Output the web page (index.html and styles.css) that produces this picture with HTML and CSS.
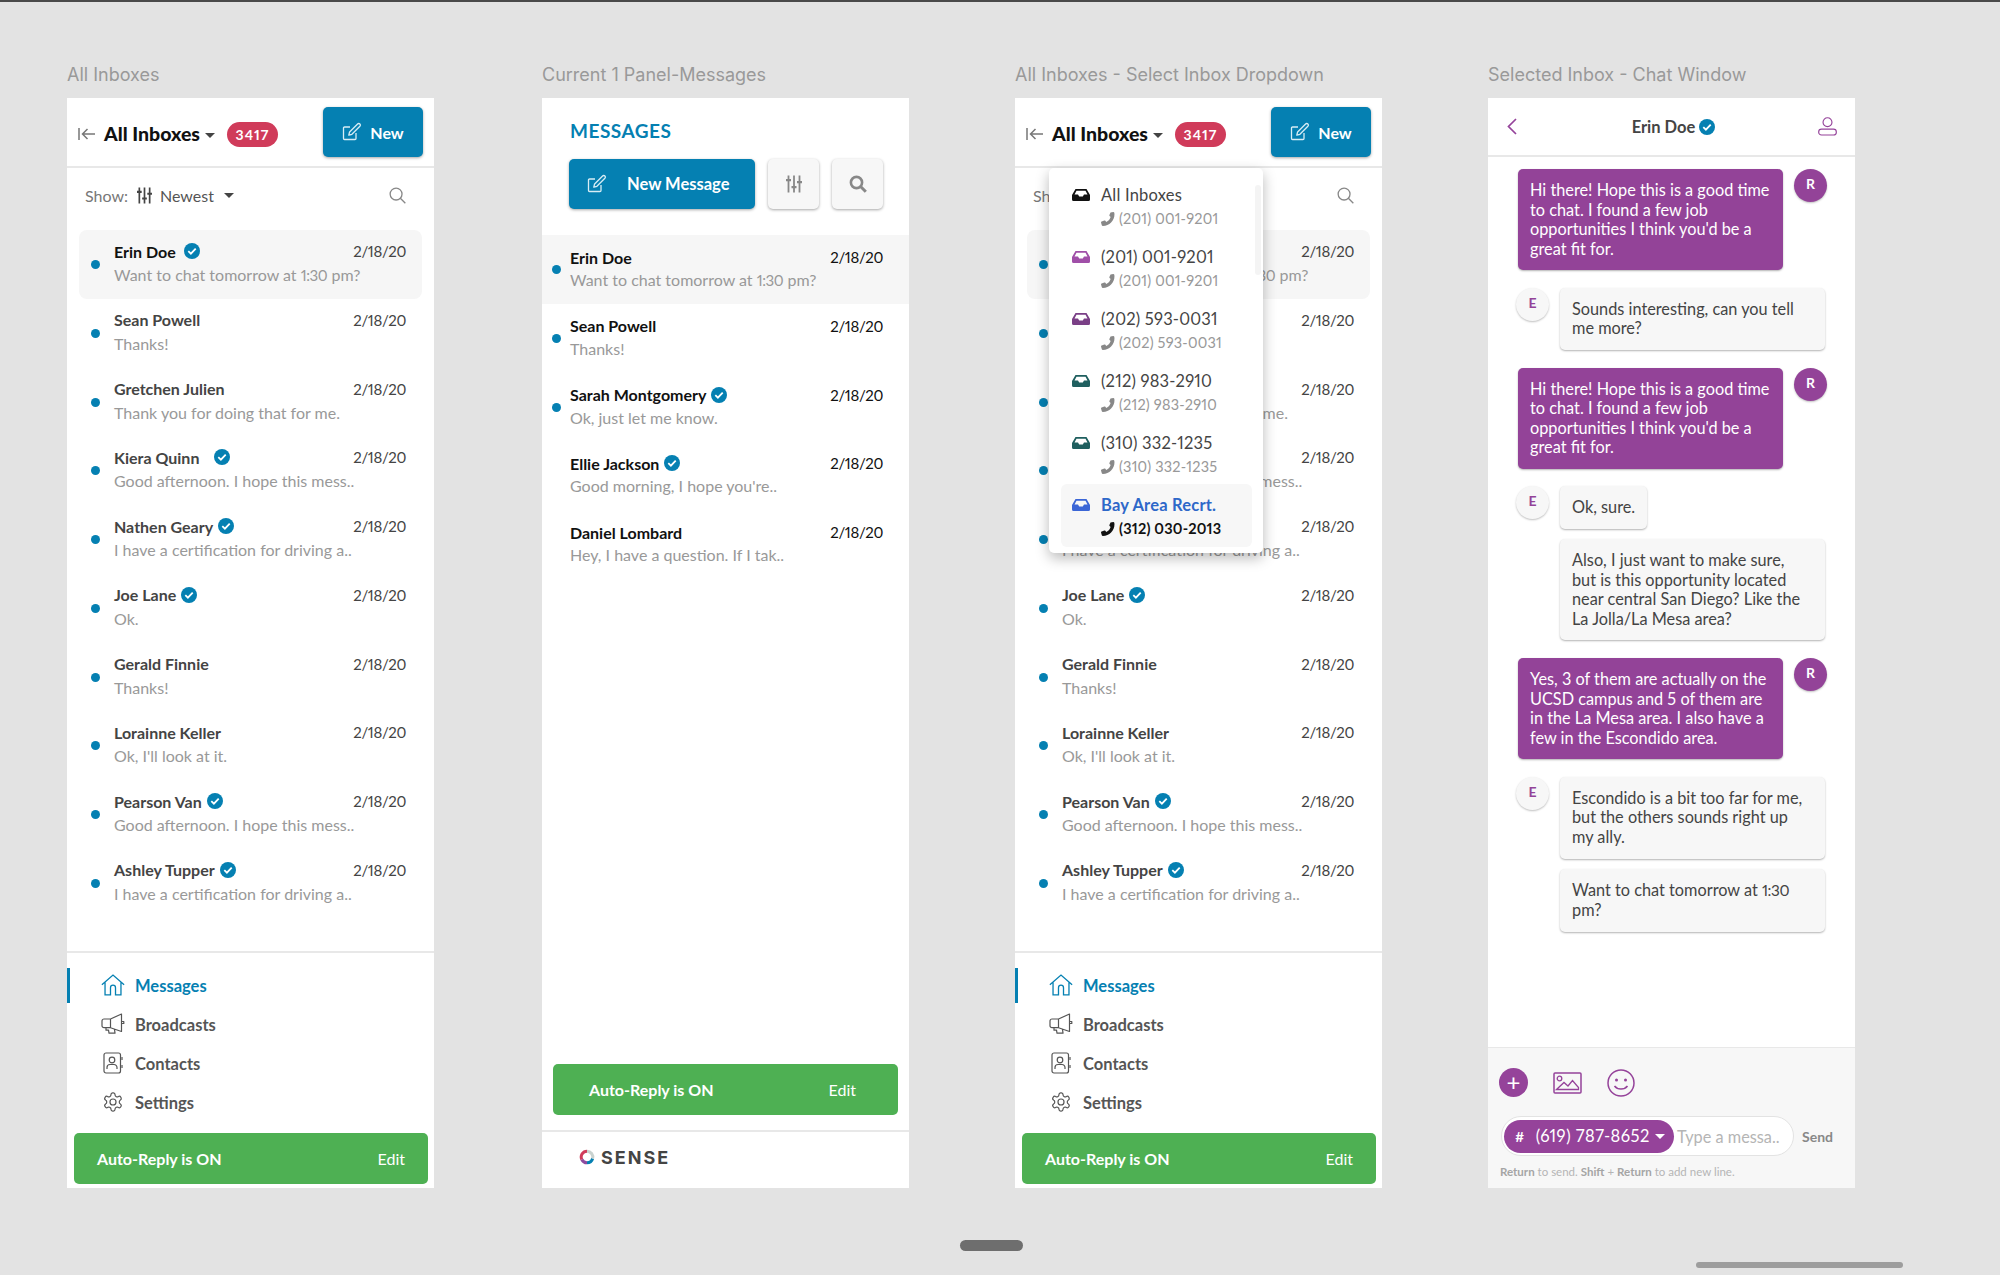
FILE: index.html
```html
<!DOCTYPE html>
<html lang="en">
<head>
    <meta charset="UTF-8">
    <title>Sense Messaging Screens</title>
    <link rel="stylesheet" href="styles.css">
</head>
<body>
    <svg class="sprite" width="0" height="0">
        <symbol id="i-compose" viewBox="0 0 20 20"><path d="M14 11v5.500a1 1 0 0 1-1 1H2.500a1 1 0 0 1-1-1V6a1 1 0 0 1 1-1H8" fill="none" stroke="currentColor" stroke-width="1.300"/><path d="M6.800 13.200l.8-3.200 8-8a1.500 1.500 0 0 1 2.300 2.300l-8 8z" fill="none" stroke="currentColor" stroke-width="1.300" stroke-linejoin="round"/></symbol>
        <symbol id="i-back" viewBox="0 0 18 14"><path d="M1 1v12M17 7H4.500M9.500 2L4.500 7l5 5" fill="none" stroke="currentColor" stroke-width="1.500"/></symbol>
        <symbol id="i-sliders" viewBox="0 0 16 17"><path d="M2.500 0v17M8 0v17M13.500 0v17" stroke="currentColor" stroke-width="1.800"/><path d="M0 3.500h5v2.200H0zM5.500 10.500h5v2.200h-5zM11 5.500h5v2.200h-5z" fill="currentColor"/></symbol>
        <symbol id="i-search" viewBox="0 0 18 18"><circle cx="7.500" cy="7.500" r="6.300" fill="none" stroke="currentColor" stroke-width="1.400"/><path d="M12 12l5.300 5.300" stroke="currentColor" stroke-width="1.400"/></symbol>
        <symbol id="i-search-bold" viewBox="0 0 18 18"><circle cx="7.500" cy="7.500" r="5.600" fill="none" stroke="currentColor" stroke-width="2.600"/><path d="M11.800 11.800l5 5" stroke="currentColor" stroke-width="3"/></symbol>
        <symbol id="i-check" viewBox="0 0 16 16"><circle cx="8" cy="8" r="8" fill="#0580b2"/><path d="M4.300 8.200l2.600 2.500 4.800-5" fill="none" stroke="#fff" stroke-width="1.800"/></symbol>
        <symbol id="i-home" viewBox="0 0 22 20"><path d="M.8 9.800L11 .9l10.200 8.900M3.700 7.500v11.500h5V12.500a2.300 2.300 0 0 1 4.600 0v6.500h5V7.500" fill="none" stroke="currentColor" stroke-width="1.200"/></symbol>
        <symbol id="i-broadcast" viewBox="0 0 24 22"><path d="M20.500 1v17.500L9.500 14.700H3a2 2 0 0 1-2-2V8a2 2 0 0 1 2-2h6.500zM9.500 6v8.700M5 14.700v2.500h2.500l.5 3h6l-.5-3.800M20.500 8.500h2.300v2h-2.300" fill="none" stroke="currentColor" stroke-width="1.200" stroke-linejoin="round"/></symbol>
        <symbol id="i-contacts" viewBox="0 0 20 22"><rect x="1" y="1" width="16.500" height="20" rx="2" fill="none" stroke="currentColor" stroke-width="1.200"/><circle cx="9" cy="8" r="2.800" fill="none" stroke="currentColor" stroke-width="1.200"/><path d="M4 17v-1.500a3 3 0 0 1 3-3h4a3 3 0 0 1 3 3V17M19 5v3M19 13v3" fill="none" stroke="currentColor" stroke-width="1.200"/></symbol>
        <symbol id="i-gear" viewBox="0 0 24 24"><path d="M12.220 2h-.44a2 2 0 0 0-2 2v.18a2 2 0 0 1-1 1.730l-.43.250a2 2 0 0 1-2 0l-.15-.08a2 2 0 0 0-2.730.730l-.22.380a2 2 0 0 0 .73 2.730l.15.100a2 2 0 0 1 1 1.720v.510a2 2 0 0 1-1 1.740l-.15.090a2 2 0 0 0-.73 2.730l.22.380a2 2 0 0 0 2.730.730l.15-.08a2 2 0 0 1 2 0l.43.250a2 2 0 0 1 1 1.730V20a2 2 0 0 0 2 2h.44a2 2 0 0 0 2-2v-.18a2 2 0 0 1 1-1.730l.43-.25a2 2 0 0 1 2 0l.15.080a2 2 0 0 0 2.730-.73l.22-.39a2 2 0 0 0-.73-2.730l-.15-.08a2 2 0 0 1-1-1.740v-.5a2 2 0 0 1 1-1.740l.15-.09a2 2 0 0 0 .73-2.730l-.22-.38a2 2 0 0 0-2.730-.73l-.15.080a2 2 0 0 1-2 0l-.43-.25a2 2 0 0 1-1-1.730V4a2 2 0 0 0-2-2z" fill="none" stroke="currentColor" stroke-width="1.300"/><circle cx="12" cy="12" r="3.300" fill="none" stroke="currentColor" stroke-width="1.300"/></symbol>
        <symbol id="i-inbox" viewBox="0 0 18 12"><path fill-rule="evenodd" fill="currentColor" d="M3.500 0h11L18 6v4.500a1.500 1.500 0 0 1-1.500 1.500h-15A1.500 1.500 0 0 1 0 10.500V6zM4.500 1.800L2.500 5.500H6l1.200 2h3.600l1.200-2h3.500l-2-3.700z"/></symbol>
        <symbol id="i-phone" viewBox="0 0 14 14"><path fill="currentColor" d="M9.500.5L12.300 0c.5 0 .9.200 1 .7C14.500 7 9 14 1.900 14c-.6 0-.9-.4-1.100-.8L0 10.600c-.1-.5.200-.9.600-1.100l2.800-.9c.4-.1.800 0 1.100.4l.8 1c2.200-1 3.700-3 4.300-5l-1-1c-.3-.3-.4-.7-.2-1.100z"/></symbol>
        <symbol id="i-user" viewBox="0 0 20 20"><circle cx="10" cy="5.500" r="4.700" fill="none" stroke="currentColor" stroke-width="1.200"/><rect x=".7" y="12.700" width="18.600" height="6.300" rx="3" fill="none" stroke="currentColor" stroke-width="1.200"/></symbol>
        <symbol id="i-image" viewBox="0 0 29 22"><rect x="1" y="1" width="27" height="20" rx="1" fill="none" stroke="currentColor" stroke-width="1.500"/><circle cx="6.500" cy="6.500" r="2.300" fill="none" stroke="currentColor" stroke-width="1.300"/><path d="M3.500 17.500l7.500-7 4 3.500 4.500-5.500 6 7v2z" fill="none" stroke="currentColor" stroke-width="1.300"/></symbol>
        <symbol id="i-smile" viewBox="0 0 28 28"><circle cx="14" cy="14" r="13" fill="none" stroke="currentColor" stroke-width="1.500"/><circle cx="9.500" cy="11" r="1.500" fill="currentColor"/><circle cx="18.500" cy="11" r="1.500" fill="currentColor"/><path d="M7.500 17c3 4 10 4 13 0" fill="none" stroke="currentColor" stroke-width="1.500"/></symbol>
    </svg>

    <div class="board">
        <!-- All inboxes -->
        <section class="screen">
            <h2 class="screen-title">All Inboxes</h2>
            <div class="panel">
                <header class="inbox-head">
                    <svg class="back-icon"><use href="#i-back"/></svg>
                    <span class="inbox-name">All Inboxes</span>
                    <span class="caret caret-head"></span>
                    <span class="count">3417</span>
                    <button class="btn-new"><svg class="compose-icon"><use href="#i-compose"/></svg>New</button>
                </header>
                <div class="show-row">
                    <span class="show-label">Show:</span>
                    <svg class="sliders-icon"><use href="#i-sliders"/></svg>
                    <span class="show-value">Newest</span>
                    <span class="caret"></span>
                    <svg class="search-icon"><use href="#i-search"/></svg>
                </div>
                <ul class="thread-list">
                    <li class="thread active"><div class="thread-top"><span class="name">Erin Doe</span><svg class="check check-wide"><use href="#i-check"/></svg><span class="date">2/18/20</span></div><p class="preview">Want to chat tomorrow at <span class="num">1:30</span> pm?</p></li>
                    <li class="thread"><div class="thread-top"><span class="name">Sean Powell</span><span class="date">2/18/20</span></div><p class="preview">Thanks!</p></li>
                    <li class="thread"><div class="thread-top"><span class="name">Gretchen Julien</span><span class="date">2/18/20</span></div><p class="preview">Thank you for doing that for me.</p></li>
                    <li class="thread"><div class="thread-top"><span class="name">Kiera Quinn</span><svg class="check check-wider"><use href="#i-check"/></svg><span class="date">2/18/20</span></div><p class="preview">Good afternoon. I hope this mess..</p></li>
                    <li class="thread"><div class="thread-top"><span class="name">Nathen Geary</span><svg class="check"><use href="#i-check"/></svg><span class="date">2/18/20</span></div><p class="preview">I have a certification for driving a..</p></li>
                    <li class="thread"><div class="thread-top"><span class="name">Joe Lane</span><svg class="check"><use href="#i-check"/></svg><span class="date">2/18/20</span></div><p class="preview">Ok.</p></li>
                    <li class="thread"><div class="thread-top"><span class="name">Gerald Finnie</span><span class="date">2/18/20</span></div><p class="preview">Thanks!</p></li>
                    <li class="thread"><div class="thread-top"><span class="name">Lorainne Keller</span><span class="date">2/18/20</span></div><p class="preview">Ok, I'll look at it.</p></li>
                    <li class="thread"><div class="thread-top"><span class="name">Pearson Van</span><svg class="check"><use href="#i-check"/></svg><span class="date">2/18/20</span></div><p class="preview">Good afternoon. I hope this mess..</p></li>
                    <li class="thread"><div class="thread-top"><span class="name">Ashley Tupper</span><svg class="check"><use href="#i-check"/></svg><span class="date">2/18/20</span></div><p class="preview">I have a certification for driving a..</p></li>
                </ul>
                <nav class="side-nav">
                    <a class="nav-item current"><svg class="nav-icon"><use href="#i-home"/></svg>Messages</a>
                    <a class="nav-item"><svg class="nav-icon"><use href="#i-broadcast"/></svg>Broadcasts</a>
                    <a class="nav-item"><svg class="nav-icon"><use href="#i-contacts"/></svg>Contacts</a>
                    <a class="nav-item"><svg class="nav-icon"><use href="#i-gear"/></svg>Settings</a>
                </nav>
                <div class="auto-reply"><strong>Auto-Reply is ON</strong><span>Edit</span></div>
            </div>
        </section>

        <!-- Current panel -->
        <section class="screen screen-current">
            <h2 class="screen-title">Current 1 Panel-Messages</h2>
            <div class="panel">
                <h3 class="messages-title">MESSAGES</h3>
                <div class="tool-row">
                    <button class="btn-message"><svg class="compose-icon"><use href="#i-compose"/></svg>New Message</button>
                    <button class="btn-square"><svg class="sliders-icon"><use href="#i-sliders"/></svg></button>
                    <button class="btn-square"><svg class="search-bold"><use href="#i-search-bold"/></svg></button>
                </div>
                <ul class="thread-list thread-list-wide">
                    <li class="thread active"><div class="thread-top"><span class="name">Erin Doe</span><span class="date">2/18/20</span></div><p class="preview">Want to chat tomorrow at <span class="num">1:30</span> pm?</p></li>
                    <li class="thread"><div class="thread-top"><span class="name">Sean Powell</span><span class="date">2/18/20</span></div><p class="preview">Thanks!</p></li>
                    <li class="thread"><div class="thread-top"><span class="name">Sarah Montgomery</span><svg class="check"><use href="#i-check"/></svg><span class="date">2/18/20</span></div><p class="preview">Ok, just let me know.</p></li>
                    <li class="thread read"><div class="thread-top"><span class="name">Ellie Jackson</span><svg class="check"><use href="#i-check"/></svg><span class="date">2/18/20</span></div><p class="preview">Good morning, I hope you're..</p></li>
                    <li class="thread read"><div class="thread-top"><span class="name">Daniel Lombard</span><span class="date">2/18/20</span></div><p class="preview">Hey, I have a question. If I tak..</p></li>
                </ul>
                <div class="auto-reply auto-reply-current"><strong>Auto-Reply is ON</strong><span>Edit</span></div>
                <footer class="brand-bar">
                    <svg class="brand-ring" viewBox="0 0 16 16" width="16" height="16">
                        <path d="M2.800 10.500A5.800 5.800 0 0 1 8 2.200" fill="none" stroke="#d03b5a" stroke-width="3"/>
                        <path d="M8 13.800a5.800 5.800 0 0 1-5.200-3.300" fill="none" stroke="#8d4a9e" stroke-width="3"/>
                        <path d="M13.600 9.500A5.800 5.800 0 0 1 8 13.800" fill="none" stroke="#0580b2" stroke-width="3"/>
                        <path d="M8 2.200a5.800 5.800 0 0 1 5.600 7.300" fill="none" stroke="#c9d2cf" stroke-width="3"/>
                    </svg>
                    <span class="brand-name">SENSE</span>
                </footer>
            </div>
        </section>

        <!-- Inbox dropdown -->
        <section class="screen screen-next">
            <h2 class="screen-title">All Inboxes - Select Inbox Dropdown</h2>
            <div class="panel panel-dropdown">
                <header class="inbox-head">
                    <svg class="back-icon"><use href="#i-back"/></svg>
                    <span class="inbox-name">All Inboxes</span>
                    <span class="caret caret-head"></span>
                    <span class="count">3417</span>
                    <button class="btn-new"><svg class="compose-icon"><use href="#i-compose"/></svg>New</button>
                </header>
                <div class="show-row">
                    <span class="show-label">Show:</span>
                    <svg class="sliders-icon"><use href="#i-sliders"/></svg>
                    <span class="show-value">Newest</span>
                    <span class="caret"></span>
                    <svg class="search-icon"><use href="#i-search"/></svg>
                </div>
                <div class="dropdown">
                    <div class="drop-item"><svg class="tray tray-black"><use href="#i-inbox"/></svg><div><div class="drop-name">All Inboxes</div><div class="drop-phone"><svg class="phone"><use href="#i-phone"/></svg>(201) 001-9201</div></div></div>
                    <div class="drop-item"><svg class="tray tray-purple"><use href="#i-inbox"/></svg><div><div class="drop-name">(201) 001-9201</div><div class="drop-phone"><svg class="phone"><use href="#i-phone"/></svg>(201) 001-9201</div></div></div>
                    <div class="drop-item"><svg class="tray tray-plum"><use href="#i-inbox"/></svg><div><div class="drop-name">(202) 593-0031</div><div class="drop-phone"><svg class="phone"><use href="#i-phone"/></svg>(202) 593-0031</div></div></div>
                    <div class="drop-item"><svg class="tray tray-teal"><use href="#i-inbox"/></svg><div><div class="drop-name">(212) 983-2910</div><div class="drop-phone"><svg class="phone"><use href="#i-phone"/></svg>(212) 983-2910</div></div></div>
                    <div class="drop-item"><svg class="tray tray-teal"><use href="#i-inbox"/></svg><div><div class="drop-name">(310) 332-1235</div><div class="drop-phone"><svg class="phone"><use href="#i-phone"/></svg>(310) 332-1235</div></div></div>
                    <div class="drop-item selected"><svg class="tray tray-blue"><use href="#i-inbox"/></svg><div><div class="drop-name">Bay Area Recrt.</div><div class="drop-phone"><svg class="phone"><use href="#i-phone"/></svg>(312) 030-2013</div></div></div>
                    <span class="drop-scroll"></span>
                </div>
                <ul class="thread-list">
                    <li class="thread active"><div class="thread-top"><span class="name">Erin Doe</span><svg class="check check-wide"><use href="#i-check"/></svg><span class="date">2/18/20</span></div><p class="preview">Want to chat tomorrow at <span class="num">1:30</span> pm?</p></li>
                    <li class="thread"><div class="thread-top"><span class="name">Sean Powell</span><span class="date">2/18/20</span></div><p class="preview">Thanks!</p></li>
                    <li class="thread"><div class="thread-top"><span class="name">Gretchen Julien</span><span class="date">2/18/20</span></div><p class="preview">Thank you for doing that for me.</p></li>
                    <li class="thread"><div class="thread-top"><span class="name">Kiera Quinn</span><svg class="check check-wider"><use href="#i-check"/></svg><span class="date">2/18/20</span></div><p class="preview">Good afternoon. I hope this mess..</p></li>
                    <li class="thread"><div class="thread-top"><span class="name">Nathen Geary</span><svg class="check"><use href="#i-check"/></svg><span class="date">2/18/20</span></div><p class="preview">I have a certification for driving a..</p></li>
                    <li class="thread"><div class="thread-top"><span class="name">Joe Lane</span><svg class="check"><use href="#i-check"/></svg><span class="date">2/18/20</span></div><p class="preview">Ok.</p></li>
                    <li class="thread"><div class="thread-top"><span class="name">Gerald Finnie</span><span class="date">2/18/20</span></div><p class="preview">Thanks!</p></li>
                    <li class="thread"><div class="thread-top"><span class="name">Lorainne Keller</span><span class="date">2/18/20</span></div><p class="preview">Ok, I'll look at it.</p></li>
                    <li class="thread"><div class="thread-top"><span class="name">Pearson Van</span><svg class="check"><use href="#i-check"/></svg><span class="date">2/18/20</span></div><p class="preview">Good afternoon. I hope this mess..</p></li>
                    <li class="thread"><div class="thread-top"><span class="name">Ashley Tupper</span><svg class="check"><use href="#i-check"/></svg><span class="date">2/18/20</span></div><p class="preview">I have a certification for driving a..</p></li>
                </ul>
                <nav class="side-nav">
                    <a class="nav-item current"><svg class="nav-icon"><use href="#i-home"/></svg>Messages</a>
                    <a class="nav-item"><svg class="nav-icon"><use href="#i-broadcast"/></svg>Broadcasts</a>
                    <a class="nav-item"><svg class="nav-icon"><use href="#i-contacts"/></svg>Contacts</a>
                    <a class="nav-item"><svg class="nav-icon"><use href="#i-gear"/></svg>Settings</a>
                </nav>
                <div class="auto-reply"><strong>Auto-Reply is ON</strong><span>Edit</span></div>
            </div>
        </section>

        <!-- Chat window -->
        <section class="screen screen-next">
            <h2 class="screen-title">Selected Inbox - Chat Window</h2>
            <div class="panel">
                <header class="chat-head">
                    <svg class="chat-back" viewBox="0 0 10 17" width="10" height="17"><path d="M9 1L1.500 8.500 9 16" fill="none" stroke="currentColor" stroke-width="1.700"/></svg>
                    <div class="chat-person"><span>Erin Doe</span><svg class="check"><use href="#i-check"/></svg></div>
                    <svg class="chat-user"><use href="#i-user"/></svg>
                </header>
                <div class="chat-body">
                    <div class="msg msg-out"><p class="bubble">Hi there! Hope this is a good time to chat. I found a few job opportunities I think you'd be a great fit for.</p><span class="avatar">R</span></div>
                    <div class="msg msg-in"><span class="avatar">E</span><p class="bubble">Sounds interesting, can you tell me more?</p></div>
                    <div class="msg msg-out"><p class="bubble">Hi there! Hope this is a good time to chat. I found a few job opportunities I think you'd be a great fit for.</p><span class="avatar">R</span></div>
                    <div class="msg msg-in msg-short msg-tight"><span class="avatar">E</span><p class="bubble">Ok, sure.</p></div>
                    <div class="msg msg-in msg-cont"><p class="bubble">Also, I just want to make sure, but is this opportunity located near central San Diego? Like the La Jolla/La Mesa area?</p></div>
                    <div class="msg msg-out"><p class="bubble">Yes, 3 of them are actually on the UCSD campus and 5 of them are in the La Mesa area. I also have a few in the Escondido area.</p><span class="avatar">R</span></div>
                    <div class="msg msg-in msg-tight"><span class="avatar">E</span><p class="bubble">Escondido is a bit too far for me, but the others sounds right up my ally.</p></div>
                    <div class="msg msg-in msg-cont"><p class="bubble">Want to chat tomorrow at <span class="num">1:30</span> pm?</p></div>
                </div>
                <footer class="composer">
                    <div class="composer-tools">
                        <span class="plus">+</span>
                        <svg class="tool-image"><use href="#i-image"/></svg>
                        <svg class="tool-smile"><use href="#i-smile"/></svg>
                    </div>
                    <div class="composer-input">
                        <div class="input-pill">
                            <span class="number-chip"><b>#</b>(619) 787-8652<i class="caret caret-white"></i></span>
                            <span class="placeholder">Type a messa..</span>
                        </div>
                        <span class="send">Send</span>
                    </div>
                    <p class="hint"><b>Return</b> to send. <b>Shift</b> + <b>Return</b> to add new line.</p>
                </footer>
            </div>
        </section>
    </div>

    <div class="pager"></div>
    <div class="h-scroll"></div>
</body>
</html>
```

FILE: styles.css
```css
* {
    box-sizing: border-box;
}
body {
    margin: 0;
    width: 2000px;
    height: 1275px;
    overflow: hidden;
    position: relative;
    background: #e3e3e3;
    border-top: 2px solid #4a4a4a;
    font-family: "Lato", "Open Sans", sans-serif;
    font-variant-numeric: proportional-nums;
    color: #444;
}
ul, p, h2, h3 {
    margin: 0;
    padding: 0;
}
ul {
    list-style: none;
}
button {
    font-family: inherit;
    border: 0;
    cursor: pointer;
}
.sprite {
    position: absolute;
}
.num {
    font-size: 0.94em;
    letter-spacing: -0.4px;
}
.board {
    display: flex;
    padding: 60px 0 0 67px;
}
.screen {
    width: 367px;
}
.screen-current {
    margin-left: 108px;
}
.screen-next {
    margin-left: 106px;
}
.screen-title {
    height: 36px;
    font-family: "Inter", sans-serif;
    font-weight: 400;
    font-size: 18px;
    line-height: 26px;
    color: #999;
}
.panel {
    position: relative;
    height: 1090px;
    background: #fff;
    display: flex;
    flex-direction: column;
}

/* inbox header */
.inbox-head {
    height: 70px;
    flex: none;
    display: flex;
    align-items: center;
    padding: 0 11px 0 11px;
    border-bottom: 2px solid #e8e8e8;
}
.back-icon {
    width: 18px;
    height: 14px;
    color: #777;
    margin-right: 8px;
    margin-top: 4px;
}
.inbox-name {
    font-size: 19.500px;
    font-weight: 900;
    color: #111;
    margin-top: 3px;
}
.caret {
    display: inline-block;
    width: 0;
    height: 0;
    border: 5px solid transparent;
    border-top: 5px solid #444;
    border-bottom: 0;
}
.caret-head {
    margin: 6px 0 0 5px;
}
.count {
    margin: 5px 0 0 12px;
    width: 51px;
    height: 25px;
    border-radius: 13px;
    background: #d03b5a;
    color: #fff;
    font-size: 14px;
    font-weight: 700;
    letter-spacing: 1px;
    line-height: 25px;
    text-align: center;
}
.btn-new {
    margin: 0 0 0 auto;
    width: 100px;
    height: 50px;
    border-radius: 5px;
    background: #0580b2;
    box-shadow: 0 1px 3px rgba(0,0,0,0.35);
    color: #fff;
    font-size: 16px;
    font-weight: 700;
    display: flex;
    align-items: center;
    justify-content: center;
    gap: 8px;
}
.compose-icon {
    width: 20px;
    height: 20px;
    color: #d8edf5;
}

/* show row */
.show-row {
    height: 54px;
    margin-bottom: 8px;
    flex: none;
    display: flex;
    align-items: center;
    padding: 0 28px 0 18px;
    font-size: 16px;
}
.show-label {
    color: #777;
}
.sliders-icon {
    width: 15px;
    height: 17px;
    margin: 0 8px 0 9px;
    color: #444;
}
.show-value {
    color: #555;
    margin-right: 10px;
}
.search-icon {
    width: 17px;
    height: 17px;
    margin-left: auto;
    color: #888;
}

/* threads */
.thread-list {
    padding: 0 12px;
}
.thread {
    position: relative;
    height: 68.750px;
    padding: 11px 16px 0 35px;
    border-radius: 8px;
}
.thread::before {
    content: "";
    position: absolute;
    left: 12px;
    top: 30px;
    width: 9px;
    height: 9px;
    border-radius: 50%;
    background: #0580b2;
}
.thread.active {
    background: #f6f6f6;
}
.thread.read::before {
    display: none;
}
.thread-top {
    display: flex;
    align-items: center;
    height: 20px;
}
.name {
    font-size: 16px;
    font-weight: 700;
    color: #444;
}
.thread.active .name {
    color: #111;
}
.check {
    width: 16px;
    height: 16px;
    margin-left: 5px;
}
.check-wide {
    margin-left: 8px;
}
.check-wider {
    margin-left: 15px;
}
.date {
    margin-left: auto;
    font-size: 15px;
    letter-spacing: -0.350px;
    color: #444;
}
.preview {
    margin-top: 4px;
    font-size: 16px;
    line-height: 20px;
    color: #999;
}

/* current panel */
.messages-title {
    margin: 21px 0 0 28px;
    font-size: 19px;
    line-height: 23px;
    font-weight: 700;
    letter-spacing: 0.500px;
    color: #0580b2;
}
.tool-row {
    display: flex;
    align-items: center;
    margin: 17px 0 26px 27px;
}
.btn-message {
    width: 186px;
    height: 50px;
    border-radius: 5px;
    background: #0580b2;
    box-shadow: 0 1px 3px rgba(0,0,0,0.35);
    color: #fff;
    font-size: 16.500px;
    font-weight: 700;
    display: flex;
    align-items: center;
    gap: 20px;
    padding-left: 18px;
}
.btn-square {
    width: 51px;
    height: 50px;
    margin-left: 13px;
    border-radius: 5px;
    background: #f7f7f7;
    box-shadow: 0 1px 3px rgba(0,0,0,0.35);
    color: #888;
    display: flex;
    align-items: center;
    justify-content: center;
}
.btn-square .sliders-icon {
    width: 16px;
    height: 18px;
    margin: 0;
    color: #888;
}
.search-bold {
    width: 18px;
    height: 18px;
}
.thread-list-wide {
    padding: 0;
}
.thread-list-wide .thread {
    padding: 12px 26px 0 28px;
    border-radius: 0;
}
.thread-list-wide .thread::before {
    left: 10px;
}
.thread-list-wide .preview {
    margin-top: 3px;
}
.thread-list-wide .name, .thread-list-wide .date {
    color: #111;
}
.auto-reply {
    height: 51px;
    margin: 0 6px 4px 7px;
    padding: 0 23px;
    flex: none;
    display: flex;
    align-items: center;
    justify-content: space-between;
    border-radius: 5px;
    background: #4eb053;
    color: #fff;
    font-size: 16px;
}
.auto-reply strong {
    font-weight: 700;
}
.auto-reply span {
    font-weight: 400;
}
.auto-reply-current {
    margin: auto 11px 0 11px;
    padding: 0 42px 0 36px;
}
.brand-bar {
    height: 58px;
    margin-top: 15px;
    padding: 0 0 6px 37px;
    flex: none;
    display: flex;
    align-items: center;
    gap: 6px;
    border-top: 2px solid #e8e8e8;
}
.brand-name {
    font-family: "Inter", sans-serif;
    font-size: 18px;
    font-weight: 700;
    letter-spacing: 2px;
    color: #444;
}

/* side nav */
.side-nav {
    margin-top: auto;
    padding: 13px 0 11px;
    border-top: 2px solid #e8e8e8;
}
.nav-item {
    position: relative;
    height: 39px;
    display: flex;
    align-items: center;
    padding-left: 68px;
    font-size: 16.500px;
    font-weight: 700;
    color: #555;
}
.nav-item.current {
    color: #0580b2;
}
.nav-item.current::before {
    content: "";
    position: absolute;
    left: 0;
    top: 2px;
    width: 3px;
    height: 35px;
    background: #0580b2;
}
.nav-icon {
    position: absolute;
    left: 34px;
    top: 8px;
    width: 24px;
    height: 22px;
}

/* dropdown */
.dropdown {
    position: absolute;
    z-index: 2;
    left: 34px;
    top: 70px;
    width: 214px;
    height: 385px;
    padding: 6px 11px 0 12px;
    background: #fff;
    border-radius: 5px;
    box-shadow: 0 5px 14px rgba(0,0,0,0.28);
}
.drop-item {
    height: 62px;
    display: flex;
    gap: 11px;
    padding: 10px 0 0 11px;
    border-radius: 6px;
}
.drop-item.selected {
    height: 63px;
    background: #f7f7f7;
}
.tray {
    width: 18px;
    height: 12px;
    margin-top: 5px;
    flex: none;
}
.tray-black { color: #111; }
.tray-purple { color: #a04fa8; }
.tray-plum { color: #7a3f86; }
.tray-teal { color: #1f5f5f; }
.tray-blue { color: #3b66d6; }
.drop-name {
    font-size: 16.500px;
    letter-spacing: 0.200px;
    line-height: 22px;
    color: #444;
}
.drop-phone {
    margin-top: 3px;
    display: flex;
    align-items: center;
    gap: 4px;
    font-size: 14.500px;
    letter-spacing: 0.200px;
    line-height: 20px;
    color: #999;
}
.phone {
    width: 14px;
    height: 14px;
    color: #888;
}
.selected .drop-name {
    font-weight: 700;
    color: #2e68c9;
}
.selected .drop-phone {
    color: #111;
    font-weight: 700;
}
.selected .phone {
    color: #111;
}
.drop-scroll {
    position: absolute;
    right: 2px;
    top: 17px;
    width: 6px;
    height: 90px;
    border-radius: 3px;
    background: #f4f4f4;
}

/* chat */
.chat-head {
    height: 59px;
    flex: none;
    display: flex;
    align-items: center;
    justify-content: space-between;
    padding: 0 18px 0 19px;
    border-bottom: 2px solid #e8e8e8;
    color: #95439a;
}
.chat-person {
    display: flex;
    align-items: center;
    gap: 4px;
    margin-left: 12px;
    font-size: 16.500px;
    font-weight: 700;
    color: #444;
}
.chat-person .check {
    margin-left: 0;
}
.chat-user {
    width: 19px;
    height: 19px;
}
.chat-body {
    flex: 1;
    padding: 12px 0 0 30px;
}
.msg {
    display: flex;
    align-items: flex-start;
    gap: 11px;
    margin-bottom: 17.500px;
}
.msg-out .bubble {
    background: #934398;
    color: #fff;
    box-shadow: 0 1px 2px rgba(0,0,0,0.3);
}
.bubble {
    width: 265px;
    padding: 11px 12px 12px 12px;
    border-radius: 5px;
    font-size: 16.300px;
    line-height: 19.600px;
}
.msg-in .bubble {
    padding-right: 16px;
    background: #f7f7f7;
    color: #444;
    box-shadow: 0 1px 2px rgba(0,0,0,0.3);
}
.avatar {
    width: 33px;
    height: 33px;
    flex: none;
    border-radius: 50%;
    background: #934398;
    color: #fff;
    font-size: 14px;
    font-weight: 700;
    line-height: 30px;
    text-align: center;
    box-shadow: 0 1px 2px rgba(0,0,0,0.25);
}
.msg-in {
    margin-left: -2px;
}
.msg-in .avatar {
    background: #f7f7f7;
    color: #934398;
}
.msg-short .bubble {
    width: auto;
    padding-right: 12px;
}
.msg-tight {
    margin-bottom: 10px;
}
.msg-cont {
    margin-left: 42px;
}
.composer {
    height: 141px;
    flex: none;
    padding-top: 20px;
    background: #f7f7f7;
    border-top: 1px solid #e8e8e8;
}
.composer-tools {
    display: flex;
    align-items: center;
    color: #95439a;
    padding-left: 11px;
}
.plus {
    width: 29px;
    height: 29px;
    border-radius: 50%;
    background: #95439a;
    color: #fff;
    font-size: 24px;
    line-height: 27px;
    text-align: center;
}
.tool-image {
    width: 29px;
    height: 22px;
    margin-left: 25px;
}
.tool-smile {
    width: 28px;
    height: 28px;
    margin-left: 25px;
}
.composer-input {
    display: flex;
    align-items: center;
    margin: 19px 0 0 13px;
}
.input-pill {
    width: 293px;
    height: 40px;
    padding: 2px;
    display: flex;
    align-items: center;
    background: #fff;
    border: 1.500px solid #e3e3e3;
    border-radius: 20px;
}
.number-chip {
    width: 170px;
    height: 33px;
    flex: none;
    display: flex;
    align-items: center;
    border-radius: 17px;
    background: #95439a;
    color: #fff;
    font-size: 16.500px;
    letter-spacing: 0.500px;
    padding-left: 11px;
    white-space: nowrap;
}
.number-chip b {
    font-weight: 700;
    font-size: 14px;
    margin-right: 11px;
}
.caret-white {
    border-top-color: #fff;
    margin-left: 5px;
}
.placeholder {
    margin-left: 3px;
    font-size: 16.300px;
    color: #b5b5b5;
    white-space: nowrap;
}
.send {
    margin-left: 8px;
    font-size: 14px;
    font-weight: 700;
    color: #888;
}
.hint {
    margin: 9px 0 0 12px;
    font-size: 11.500px;
    color: #b5b5b5;
}
.hint b {
    color: #a5a5a5;
}

/* window furniture */
.pager {
    position: absolute;
    left: 960px;
    top: 1238px;
    width: 63px;
    height: 11px;
    border-radius: 6px;
    background: #6e6e6e;
}
.h-scroll {
    position: absolute;
    left: 1696px;
    top: 1260px;
    width: 207px;
    height: 6px;
    border-radius: 3px;
    background: #9d9d9d;
}
```
